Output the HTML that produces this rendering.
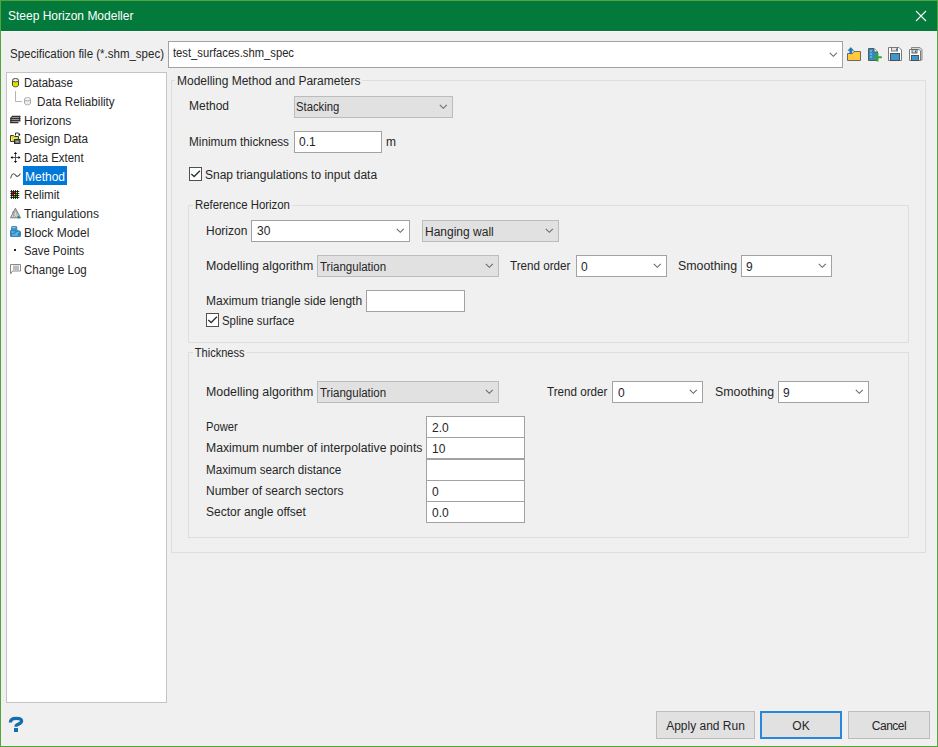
<!DOCTYPE html>
<html><head><meta charset="utf-8">
<style>
*{box-sizing:border-box;margin:0;padding:0}
html,body{width:938px;height:747px;overflow:hidden;background:#f0f0f0}
body{font-family:"Liberation Sans",sans-serif;font-size:12px;color:#262626;position:relative}
.a{position:absolute}
.t{position:absolute;white-space:nowrap;line-height:14px;height:14px}
.win{left:0;top:0;width:938px;height:747px;border:1px solid #52a53a;}
.title{left:0;top:0;width:938px;height:31px;background:#037a3c;border:1px solid #52a53a;border-bottom:none}
.edit{position:absolute;background:#fff;border:1px solid #a2a2a2}
.cbw{position:absolute;background:#fff;border:1px solid #a2a2a2}
.cbg{position:absolute;background:#e1e1e1;border:1px solid #bcbcbc}
.grp{position:absolute;border:1px solid #dedede}
.chev{position:absolute;width:7px;height:4px}
.btn{position:absolute;background:#e1e1e1;border:1px solid #bcbcbc;text-align:center;line-height:26px;padding-top:1px}
.chk{position:absolute;width:13px;height:13px;background:#fff;border:1px solid #333}
</style></head><body>
<div class="a win"></div>
<div class="a title"></div>
<div class="a" style="left:1px;top:31px;width:850px;height:1px;background:#fafafa"></div>
<div class="t" style="left:8px;top:9px;color:#fff">Steep Horizon Modeller</div>
<svg class="a" style="left:915px;top:10px" width="12" height="12" viewBox="0 0 12 12"><path d="M1 1L11 11M11 1L1 11" stroke="#fff" stroke-width="1.1"/></svg>

<!-- spec row -->
<div class="t" style="left:10px;top:47px;transform:scaleX(0.958);transform-origin:0 0">Specification file (*.shm_spec)</div>
<div class="cbw" style="left:168px;top:41px;width:675px;height:27px"></div>
<div class="t" style="left:173px;top:46px;transform:scaleX(0.935);transform-origin:0 0">test_surfaces.shm_spec</div>

<!-- tree -->
<div class="a" style="left:6px;top:72px;width:161px;height:631px;background:#fff;border:1px solid #c4c4c4"></div>


<!-- tree items -->
<div class="t" style="left:24px;top:76px;transform:scaleX(0.95);transform-origin:0 0">Database</div>
<div class="t" style="left:37px;top:95px;transform:scaleX(0.97);transform-origin:0 0">Data Reliability</div>
<div class="t" style="left:24px;top:114px">Horizons</div>
<div class="t" style="left:24px;top:132px;transform:scaleX(0.97);transform-origin:0 0">Design Data</div>
<div class="t" style="left:24px;top:151px;transform:scaleX(0.95);transform-origin:0 0">Data Extent</div>
<div class="a" style="left:23px;top:166px;width:44px;height:19px;background:#0078d7"></div>
<div class="t" style="left:25px;top:170px;color:#fff">Method</div>
<div class="t" style="left:24px;top:188px;transform:scaleX(0.97);transform-origin:0 0">Relimit</div>
<div class="t" style="left:24px;top:207px">Triangulations</div>
<div class="t" style="left:24px;top:226px">Block Model</div>
<div class="t" style="left:24px;top:244px;transform:scaleX(0.94);transform-origin:0 0">Save Points</div>
<div class="t" style="left:24px;top:263px;transform:scaleX(0.96);transform-origin:0 0">Change Log</div>
<!-- tree icons -->
<svg class="a" style="left:0;top:0" width="40" height="280" viewBox="0 0 40 280">
<!-- database -->
<path d="M12.5 80.5v4.5c0 1.1 1.3 1.8 3 1.8s3-.7 3-1.8v-4.5" fill="#e4e000" stroke="#4a4a30" stroke-width="1"/>
<ellipse cx="15.5" cy="80.2" rx="3" ry="1.7" fill="#f4f4f4" stroke="#4a4a30" stroke-width="1"/>
<!-- tree line -->
<path d="M15.5 91v10.5H22" fill="none" stroke="#b4b4b4" stroke-width="1"/>
<!-- data reliability -->
<path d="M24.5 99.5v3.5c0 1.1 1.3 1.8 3 1.8s3-.7 3-1.8v-3.5" fill="#ececec" stroke="#a8a8a8" stroke-width="1"/>
<ellipse cx="27.5" cy="99.2" rx="3" ry="1.6" fill="#fafafa" stroke="#a8a8a8" stroke-width="1"/>
<!-- horizons -->
<path d="M12 116.5H20.5M10 118.5H20.5M10 120.5H20.5M10 122.5H18.5" stroke="#303030" stroke-width="1.3"/>
<path d="M12 116.5L11 118.5V122.5M19.5 116.5V121.5" stroke="#3a3a3a" stroke-width="1.1" fill="none"/>
<!-- design data -->
<path d="M10.5 135.5h3l1 1h4v5h-8z" fill="#d6d43a" stroke="#3e3e20" stroke-width="1"/>
<path d="M11.5 137v4l2-2.5h3" fill="none" stroke="#f0f070" stroke-width="1"/>
<rect x="14.5" y="139.5" width="5.5" height="4" fill="#6e6e6e" stroke="#303030" stroke-width="1"/>
<rect x="16" y="141" width="2.5" height="1.5" fill="#a8a8a8"/>
<path d="M15.5 135.5v-2.5h3l1 1" fill="none" stroke="#333" stroke-width="1"/>
<circle cx="19.3" cy="134.8" r="1" fill="#222"/>
<!-- data extent -->
<path d="M15.5 153v9M11 157.5h9" stroke="#555" stroke-width="1"/>
<path d="M15.5 152l-1.6 2h3.2zM15.5 163l-1.6-2h3.2zM10.5 157.5l2-1.6v3.2zM20.5 157.5l-2-1.6v3.2z" fill="#000"/>
<!-- method tilde -->
<path d="M10.6 178.3C11.3 175.5 12.2 173.8 13.6 173.7C15.2 173.6 15.8 176.4 17.3 176.4C18.8 176.4 19.6 175 20.4 173.4" fill="none" stroke="#555" stroke-width="1.1"/>
<!-- relimit -->
<rect x="12" y="192" width="2" height="2" fill="#f00"/><rect x="14" y="192" width="2" height="2" fill="#f00"/><rect x="16" y="192" width="2" height="2" fill="#ee0"/>
<rect x="12" y="194" width="2" height="2" fill="#f00"/><rect x="14" y="194" width="2" height="2" fill="#ee0"/><rect x="16" y="194" width="2" height="2" fill="#0d0"/>
<rect x="12" y="196" width="2" height="2" fill="#ee0"/><rect x="14" y="196" width="2" height="2" fill="#0d0"/><rect x="16" y="196" width="2" height="2" fill="#0d0"/>
<path d="M10.3 191.5h9M10.3 193.5h9M10.3 195.5h9M10.3 197.5h9M11.5 190v9M13.5 190v9M15.5 190v9M17.5 190v9" stroke="#1a1a1a" stroke-width="0.9"/>
<!-- triangulations -->
<path d="M15.4 208.2L10.5 217.8h10z" fill="#d8d8d8" stroke="#7a7a7a" stroke-width="1"/>
<path d="M15.4 209L13 217.5M15.4 209l2.5 8.5M12.5 213.5l4 4" stroke="#9a9a9a" stroke-width="0.8"/>
<path d="M17.5 216.5l2 1.5" stroke="#108a8a" stroke-width="1.8"/>
<circle cx="13" cy="212.2" r="0.8" fill="#3a9a9a"/>
<!-- block model -->
<path d="M11 227.5Q11 226 12.5 226H16Q17.3 226 17.3 227.5V231H11z" fill="#3d90c2"/>
<path d="M10 231Q10 230 11 230H17.5L20 230.8Q21 231.2 21 232.5V235.5Q21 237 19.5 237H11.5Q10 237 10 235.5z" fill="#2e88bf"/>
<path d="M12.3 227.6h3.2M11.5 232h3M15.5 233.8l3.2-1.6M12 235h6" stroke="#a6d4ee" stroke-width="0.9"/>
<!-- save points -->
<rect x="14" y="249" width="2" height="2" fill="#222"/>
<!-- change log -->
<path d="M10.5 264.5h10v6.5h-8l-2 3z" fill="#fff" stroke="#8a8a8a" stroke-width="1"/>
<rect x="13" y="265.5" width="6" height="4.8" fill="#bdbdbd"/>
</svg>
<!-- outer group -->
<div class="grp" style="left:171px;top:80px;width:755px;height:473px"></div>
<div class="t" style="left:175px;top:74px;padding:0 2px;background:#f0f0f0">Modelling Method and Parameters</div>

<div class="t" style="left:189px;top:99px">Method</div>
<div class="cbg" style="left:294px;top:96px;width:159px;height:22px"></div>
<div class="t" style="left:296px;top:100px;transform:scaleX(0.94);transform-origin:0 0">Stacking</div>

<div class="t" style="left:189px;top:135px;transform:scaleX(0.98);transform-origin:0 0">Minimum thickness</div>
<div class="edit" style="left:294px;top:131px;width:88px;height:22px"></div>
<div class="t" style="left:299px;top:135px">0.1</div>
<div class="t" style="left:386px;top:135px">m</div>


<div class="t" style="left:205px;top:168px">Snap triangulations to input data</div>

<!-- reference horizon -->
<div class="grp" style="left:188px;top:205px;width:721px;height:138px"></div>
<div class="t" style="left:193px;top:198px;padding:0 2px;background:#f0f0f0;transform:scaleX(0.95);transform-origin:0 0">Reference Horizon</div>
<div class="t" style="left:206px;top:224px">Horizon</div>
<div class="cbw" style="left:251px;top:220px;width:159px;height:22px"></div>
<div class="t" style="left:257px;top:224px">30</div>
<div class="cbg" style="left:422px;top:220px;width:137px;height:22px"></div>
<div class="t" style="left:425px;top:225px">Hanging wall</div>

<div class="t" style="left:206px;top:259px;transform:scaleX(1.03);transform-origin:0 0">Modelling algorithm</div>
<div class="cbg" style="left:317px;top:255px;width:182px;height:22px"></div>
<div class="t" style="left:320px;top:260px;transform:scaleX(0.96);transform-origin:0 0">Triangulation</div>
<div class="t" style="left:510px;top:259px;transform:scaleX(0.97);transform-origin:0 0">Trend order</div>
<div class="cbw" style="left:576px;top:255px;width:91px;height:22px"></div>
<div class="t" style="left:581px;top:260px">0</div>
<div class="t" style="left:678px;top:259px;transform:scaleX(1.03);transform-origin:0 0">Smoothing</div>
<div class="cbw" style="left:741px;top:255px;width:91px;height:22px"></div>
<div class="t" style="left:746px;top:260px">9</div>

<div class="t" style="left:206px;top:294px">Maximum triangle side length</div>
<div class="edit" style="left:366px;top:290px;width:99px;height:22px"></div>

<div class="t" style="left:222px;top:314px;transform:scaleX(0.95);transform-origin:0 0">Spline surface</div>

<!-- thickness -->
<div class="grp" style="left:188px;top:352px;width:721px;height:186px"></div>
<div class="t" style="left:193px;top:346px;padding:0 2px;background:#f0f0f0;transform:scaleX(0.92);transform-origin:0 0">Thickness</div>
<div class="t" style="left:206px;top:385px;transform:scaleX(1.03);transform-origin:0 0">Modelling algorithm</div>
<div class="cbg" style="left:317px;top:381px;width:182px;height:22px"></div>
<div class="t" style="left:320px;top:386px;transform:scaleX(0.96);transform-origin:0 0">Triangulation</div>
<div class="t" style="left:547px;top:385px;transform:scaleX(0.97);transform-origin:0 0">Trend order</div>
<div class="cbw" style="left:612px;top:381px;width:91px;height:22px"></div>
<div class="t" style="left:618px;top:386px">0</div>
<div class="t" style="left:715px;top:385px;transform:scaleX(1.03);transform-origin:0 0">Smoothing</div>
<div class="cbw" style="left:778px;top:381px;width:91px;height:22px"></div>
<div class="t" style="left:783px;top:386px">9</div>

<div class="t" style="left:206px;top:420px;transform:scaleX(0.93);transform-origin:0 0">Power</div>
<div class="t" style="left:206px;top:441px;transform:scaleX(1.017);transform-origin:0 0">Maximum number of interpolative points</div>
<div class="t" style="left:206px;top:463px;transform:scaleX(0.97);transform-origin:0 0">Maximum search distance</div>
<div class="t" style="left:206px;top:484px">Number of search sectors</div>
<div class="t" style="left:206px;top:505px">Sector angle offset</div>
<div class="edit" style="left:426px;top:416px;width:99px;height:22px"></div>
<div class="edit" style="left:426px;top:437px;width:99px;height:22px"></div>
<div class="edit" style="left:426px;top:459px;width:99px;height:22px"></div>
<div class="edit" style="left:426px;top:480px;width:99px;height:22px"></div>
<div class="edit" style="left:426px;top:501px;width:99px;height:22px"></div>
<div class="t" style="left:432px;top:421px">2.0</div>
<div class="t" style="left:432px;top:442px">10</div>
<div class="t" style="left:432px;top:485px">0</div>
<div class="t" style="left:432px;top:506px">0.0</div>

<svg class="a" style="left:829px;top:52px" width="9" height="6" viewBox="0 0 9 6"><path d="M0.8 0.8L4.3 4.3L7.8 0.8" stroke="#6a6a6a" fill="none" stroke-width="1.1"/></svg>
<svg class="a" style="left:439px;top:104px" width="9" height="6" viewBox="0 0 9 6"><path d="M0.8 0.8L4.3 4.3L7.8 0.8" stroke="#6a6a6a" fill="none" stroke-width="1.1"/></svg>
<svg class="a" style="left:396px;top:228px" width="9" height="6" viewBox="0 0 9 6"><path d="M0.8 0.8L4.3 4.3L7.8 0.8" stroke="#6a6a6a" fill="none" stroke-width="1.1"/></svg>
<svg class="a" style="left:545px;top:228px" width="9" height="6" viewBox="0 0 9 6"><path d="M0.8 0.8L4.3 4.3L7.8 0.8" stroke="#6a6a6a" fill="none" stroke-width="1.1"/></svg>
<svg class="a" style="left:485px;top:263px" width="9" height="6" viewBox="0 0 9 6"><path d="M0.8 0.8L4.3 4.3L7.8 0.8" stroke="#6a6a6a" fill="none" stroke-width="1.1"/></svg>
<svg class="a" style="left:653px;top:263px" width="9" height="6" viewBox="0 0 9 6"><path d="M0.8 0.8L4.3 4.3L7.8 0.8" stroke="#6a6a6a" fill="none" stroke-width="1.1"/></svg>
<svg class="a" style="left:818px;top:263px" width="9" height="6" viewBox="0 0 9 6"><path d="M0.8 0.8L4.3 4.3L7.8 0.8" stroke="#6a6a6a" fill="none" stroke-width="1.1"/></svg>
<svg class="a" style="left:485px;top:389px" width="9" height="6" viewBox="0 0 9 6"><path d="M0.8 0.8L4.3 4.3L7.8 0.8" stroke="#6a6a6a" fill="none" stroke-width="1.1"/></svg>
<svg class="a" style="left:689px;top:389px" width="9" height="6" viewBox="0 0 9 6"><path d="M0.8 0.8L4.3 4.3L7.8 0.8" stroke="#6a6a6a" fill="none" stroke-width="1.1"/></svg>
<svg class="a" style="left:855px;top:389px" width="9" height="6" viewBox="0 0 9 6"><path d="M0.8 0.8L4.3 4.3L7.8 0.8" stroke="#6a6a6a" fill="none" stroke-width="1.1"/></svg>
<!-- toolbar icons -->
<svg class="a" style="left:840px;top:40px" width="90" height="28" viewBox="840 40 90 28">
<!-- open folder -->
<path d="M847.5 53.5h5l1.5-2h6.5v9h-13z" fill="#ffc83d" stroke="#6e6a58" stroke-width="1"/>
<path d="M850.8 47.5l-2.8 3h1.8v3.2h2v-3.2h1.8z" fill="#1a78b4" stroke="#1a78b4" stroke-width="0.6"/>
<!-- new doc -->
<path d="M868.5 48.5h5.5l3.5 3.5v8.5h-9z" fill="#2e8bc3" stroke="#5a5a5a" stroke-width="1"/>
<path d="M874 48.5v3.5h3.5" fill="#fff" stroke="#5a5a5a" stroke-width="1"/>
<path d="M870 51h2M870 54h2M870 57h2" stroke="#9dcdea" stroke-width="1.2"/>
<path d="M877.5 53v8.5M873 57.2h8.8" stroke="#3aa336" stroke-width="2"/>
<!-- save -->
<path d="M888.5 47.5h10.5l2.5 2.5v10.5h-13z" fill="#fff" stroke="#7a7a7a" stroke-width="1"/>
<rect x="891.5" y="47.5" width="6" height="3.5" fill="#e4e4e4" stroke="#7a7a7a" stroke-width="1"/>
<rect x="896" y="48.5" width="1" height="2" fill="#1a78b4"/>
<rect x="890.5" y="53.5" width="9" height="7" fill="#3d98cf" stroke="#505050" stroke-width="1"/>
<!-- save as -->
<path d="M911.5 47.5h8.5l2 2v10.5h-10.5z" fill="#d8d8d8" stroke="#8a8a8a" stroke-width="1"/>
<path d="M909.5 49.5h9.5l1.5 1.5v9.5h-11z" fill="#fff" stroke="#7a7a7a" stroke-width="1"/>
<rect x="912" y="49.5" width="5" height="3.5" fill="#d4d4d4" stroke="#666" stroke-width="1"/>
<rect x="915" y="50.5" width="1" height="2" fill="#1a78b4"/>
<rect x="911.5" y="55.5" width="7" height="5" fill="#3d98cf" stroke="#505050" stroke-width="1"/>
</svg>
<svg class="a" style="left:189px;top:167px" width="13" height="14" viewBox="0 0 13 14"><rect x="0.5" y="0.5" width="12" height="13" fill="#fff" stroke="#505050" stroke-width="1"/><path d="M2.3 7L5.2 9.6L10.9 3.8" fill="none" stroke="#333" stroke-width="1.4"/></svg>
<svg class="a" style="left:206px;top:313px" width="13" height="14" viewBox="0 0 13 14"><rect x="0.5" y="0.5" width="12" height="13" fill="#fff" stroke="#505050" stroke-width="1"/><path d="M2.3 7L5.2 9.6L10.9 3.8" fill="none" stroke="#333" stroke-width="1.4"/></svg>
<!-- buttons -->
<div class="btn" style="left:656px;top:711px;width:99px;height:28px">Apply and Run</div>
<div class="btn" style="left:760px;top:711px;width:82px;height:28px;border:2px solid #2986da;line-height:25px">OK</div>
<div class="btn" style="left:848px;top:711px;width:82px;height:28px;letter-spacing:-0.5px">Cancel</div>
<svg class="a" style="left:0;top:700px" width="40" height="40" viewBox="0 700 40 40"><path d="M10.4 722.4C10.4 719 13 718.3 16.2 718.3C19.6 718.3 21.6 719.4 21.6 721C21.6 722.9 19.6 723.6 17.6 724.6C16.4 725.2 15.9 725.8 15.9 726.8" fill="none" stroke="#1170ab" stroke-width="3.3"/><rect x="14" y="728" width="4" height="4" fill="#1170ab"/></svg>
</body></html>
